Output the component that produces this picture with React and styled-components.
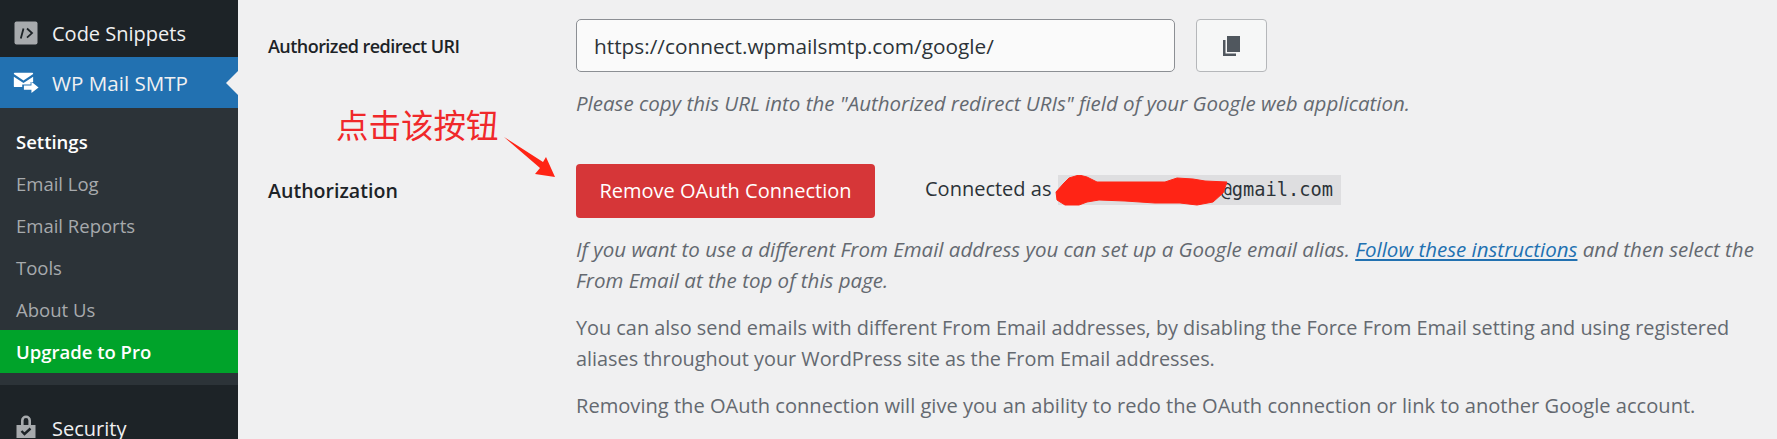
import React from 'react';
import styled, { createGlobalStyle } from 'styled-components';

const GlobalStyle = createGlobalStyle`
  html, body {
    margin: 0;
    padding: 0;
    height: 100%;
    overflow: hidden;
    background: #f0f0f1;
  }
  * {
    box-sizing: border-box;
  }
`;

const fontStack = `"Open Sans", "Noto Sans", sans-serif`;

const Page = styled.div`
  position: relative;
  display: flex;
  width: 1777px;
  height: 439px;
  overflow: hidden;
  font-family: ${fontStack};
  background: #f0f0f1;
  color: #2c3338;
`;

const Sidebar = styled.nav`
  width: 238px;
  flex-shrink: 0;
  display: flex;
  flex-direction: column;
  background: #1d2327;
`;

const MenuRow = styled.div`
  position: relative;
  flex-shrink: 0;
  height: ${(p) => p.$height}px;
  padding-top: ${(p) => p.$pad || 0}px;
  padding-left: 13px;
  display: flex;
  align-items: center;
  gap: 13px;
  font-size: ${(p) => (p.$active ? 20.6 : 20)}px;
  color: #f0f0f1;
  background: ${(p) => (p.$active ? '#2271b1' : 'transparent')};
`;

const IconSlot = styled.span`
  width: 26px;
  height: 26px;
  display: flex;
  align-items: center;
  justify-content: center;
  flex-shrink: 0;
`;

const ActiveNotch = styled.span`
  position: absolute;
  right: 0;
  top: 14px;
  border-style: solid;
  border-width: 12px 12px 12px 0;
  border-color: transparent #f0f0f1 transparent transparent;
`;

const SubMenu = styled.div`
  flex-shrink: 0;
  height: 277px;
  padding-top: 12px;
  background: #2c3338;
`;

const SubItem = styled.div`
  height: ${(p) => (p.$upgrade ? 43 : 42)}px;
  display: flex;
  align-items: center;
  padding-left: 16px;
  font-size: 18.5px;
  font-weight: ${(p) => (p.$bold ? 600 : 400)};
  color: ${(p) => (p.$bold ? '#fff' : '#a7aaad')};
  background: ${(p) => (p.$upgrade ? '#00a32a' : 'transparent')};
`;

const Content = styled.main`
  flex: 1;
  padding: 19px 0 0 30px;
`;

const SettingRow = styled.section`
  display: grid;
  grid-template-columns: 308px 1fr;
  margin-top: ${(p) => p.$top}px;
`;

const Label = styled.div`
  height: ${(p) => p.$height}px;
  display: flex;
  align-items: center;
  font-size: ${(p) => p.$size}px;
  letter-spacing: ${(p) => p.$track || 0}px;
  font-weight: 600;
  color: #1d2327;
`;

const FieldLine = styled.div`
  display: flex;
  align-items: center;
  gap: ${(p) => p.$gap}px;
`;

const UrlInput = styled.input`
  width: 599px;
  height: 53px;
  padding: 0 17px;
  border: 1px solid #8c8f94;
  border-radius: 5px;
  background: #fafafa;
  font: 400 20.8px ${fontStack};
  color: #2c3338;
`;

const CopyButton = styled.button`
  width: 71px;
  height: 53px;
  padding: 0;
  display: flex;
  align-items: center;
  justify-content: center;
  border: 1px solid #b5b7ba;
  border-radius: 4px;
  background: #f6f7f7;
`;

const Help = styled.p`
  margin: ${(p) => p.$top}px 0 0;
  width: 1190px;
  font-size: ${(p) => p.$size}px;
  line-height: 31.5px;
  font-style: ${(p) => (p.$plain ? 'normal' : 'italic')};
  color: #646970;
`;

const HelpLink = styled.a`
  color: #2271b1;
  text-decoration: underline;
`;

const DangerButton = styled.button`
  width: 299px;
  height: 54px;
  padding: 0;
  border: 0;
  border-radius: 4px;
  background: #d63638;
  color: #fff;
  font: 400 20px ${fontStack};
`;

const ConnectedText = styled.span`
  position: relative;
  top: -2px;
  display: flex;
  align-items: center;
  width: 416px;
  font-size: 20px;
  color: #2c3338;
`;

const Code = styled.code`
  position: absolute;
  left: 133px;
  top: 0;
  width: 283px;
  height: 30px;
  padding-right: 8px;
  text-align: right;
  background: #dedee0;
  font: 400 18.7px/30px "DejaVu Sans Mono", monospace;
  color: #2c3338;
`;

const Scribble = styled.svg`
  position: absolute;
  left: 130px;
  top: 0;
`;

const Annotation = styled.div`
  position: absolute;
  left: 336px;
  top: 102px;
  font: 400 32.5px/44px "Noto Sans CJK SC", sans-serif;
  color: #f0282a;
`;

const Arrow = styled.svg`
  position: absolute;
  left: 500px;
  top: 132px;
`;

const CodeSnippetsIcon = () => (
  <svg width="24" height="24" viewBox="0 0 24 24">
    <rect x="0.5" y="0.5" width="23" height="23" rx="2" fill="#a7aaad" />
    <path d="M9.5 7.5 6.8 17.5M13 7.5l5 4.6-5 4.6" fill="none" stroke="#1d2327" strokeWidth="1.8" />
  </svg>
);

const MailIcon = () => (
  <svg width="31" height="25" viewBox="0 0 31 25">
    <path d="M2 1h21a1 1 0 0 1 1 1v.5L12.5 10 1 2.5V2a1 1 0 0 1 1-1z" fill="#fff" />
    <path d="M1 5.5 12.5 13 24 5.500V12h-3v3H11v3H2a1 1 0 0 1-1-1z" fill="#fff" />
    <path d="M13 16h9v-4.500l8.500 7-8.500 6.500V21h-9z" fill="#fff" />
  </svg>
);

const LockIcon = () => (
  <svg width="20" height="28" viewBox="0 0 20 28">
    <path d="M5 11V6.500a5 5 0 0 1 10 0V11h-2.600V6.500a2.400 2.400 0 0 0-4.800 0V11z" fill="#a7aaad" />
    <rect x="0.500" y="11" width="19" height="13" fill="#a7aaad" />
    <path d="M5.500 17l3 3 6-5.500" fill="none" stroke="#1d2327" strokeWidth="2.400" />
    <rect x="0.500" y="25.500" width="19" height="1.500" fill="#a7aaad" />
  </svg>
);

const CopyIcon = () => (
  <svg width="17" height="20" viewBox="0 0 17 20">
    <rect x="4" y="0" width="13" height="16" fill="#50575e" />
    <path d="M0 4h2.500v13.500H13V20H0z" fill="#50575e" />
  </svg>
);

const sideItems = ['Email Log', 'Email Reports', 'Tools', 'About Us'];

const App = () => (
  <>
    <GlobalStyle />
    <Page>
      <Sidebar>
        <MenuRow $height={57} $pad={9}>
          <IconSlot><CodeSnippetsIcon /></IconSlot>
          Code Snippets
        </MenuRow>
        <MenuRow $height={51} $active>
          <IconSlot><MailIcon /></IconSlot>
          WP Mail SMTP
          <ActiveNotch />
        </MenuRow>
        <SubMenu>
          <SubItem $bold>Settings</SubItem>
          {sideItems.map((item) => (
            <SubItem key={item}>{item}</SubItem>
          ))}
          <SubItem $upgrade $bold>Upgrade to Pro</SubItem>
        </SubMenu>
        <MenuRow $height={86}>
          <IconSlot><LockIcon /></IconSlot>
          Security
        </MenuRow>
      </Sidebar>

      <Content>
        <SettingRow $top={0}>
          <Label $height={53} $size={18} $track={-0.55}>Authorized redirect URI</Label>
          <div>
            <FieldLine $gap={21}>
              <UrlInput readOnly value="https://connect.wpmailsmtp.com/google/" />
              <CopyButton><CopyIcon /></CopyButton>
            </FieldLine>
            <Help $top={16} $size={20.5}>
              Please copy this URL into the "Authorized redirect URIs" field of your Google web application.
            </Help>
          </div>
        </SettingRow>

        <SettingRow $top={44}>
          <Label $height={54} $size={19.6}>Authorization</Label>
          <div>
            <FieldLine $gap={50}>
              <DangerButton>Remove OAuth Connection</DangerButton>
              <ConnectedText>
                Connected as
                <Code>@gmail.com</Code>
                <Scribble width="176" height="32" viewBox="0 0 176 32">
                  <path
                    d="M1 17L9 8 14 3 24 0 32 2 42 7 70 7 110 7 122 3 138 4 150 6 172 7 168 18 158 27 142 30 125 28 100 28 70 26 44 25 32 27 24 30 10 30 2 25Z"
                    fill="#ff2415"
                    stroke="#ff2415"
                    strokeLinejoin="round"
                  />
                </Scribble>
              </ConnectedText>
            </FieldLine>
            <Help $top={16} $size={20.5}>
              If you want to use a different From Email address you can set up a Google email alias.{' '}
              <HelpLink href="#">Follow these instructions</HelpLink> and then select the From Email at the top of this page.
            </Help>
            <Help $plain $top={15} $size={19.85}>
              You can also send emails with different From Email addresses, by disabling the Force From Email setting and using registered aliases throughout your WordPress site as the From Email addresses.
            </Help>
            <Help $plain $top={15} $size={20.1}>
              Removing the OAuth connection will give you an ability to redo the OAuth connection or link to another Google account.
            </Help>
          </div>
        </SettingRow>
      </Content>

      <Annotation>点击该按钮</Annotation>
      <Arrow width="60" height="50" viewBox="0 0 60 50">
        <path d="M4 5 43 30 46 25 55 45 35 42 40 36z" fill="#ff2415" />
      </Arrow>
    </Page>
  </>
);

export default App;
